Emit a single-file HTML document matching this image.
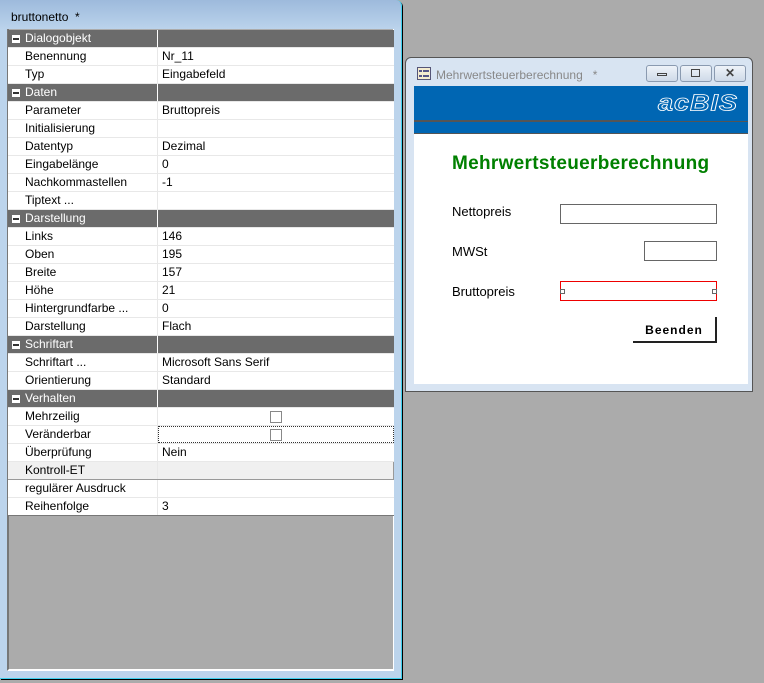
<!DOCTYPE html><html><head><style>
body{margin:0;width:764px;height:683px;background:#ababab;position:relative;overflow:hidden;font-family:"Liberation Sans",sans-serif;font-size:12px}
.lw{position:absolute;left:0;top:0;width:401px;height:678px;background:linear-gradient(#9dbadc 0,#bcd4ec 30px,#bcd4ec);border-right:1px solid #3fd0ee;border-bottom:1px solid #3fd0ee;border-radius:0 6px 0 0;box-shadow:1px 1px 0 #000}
.lt{position:absolute;left:11px;top:10px;font-size:12px;color:#000}
.inner{position:absolute;left:7px;top:29px;width:387px;height:642px;background:#ababab;border-left:2px solid #777;border-bottom:2px solid #fff;border-right:1px solid #fff;box-sizing:border-box}
.grid{position:absolute;left:8px;top:30px;width:386px}
.r{height:18px;display:flex;background:#fff;border-bottom:1px solid #e8e8e8;box-sizing:border-box;line-height:17px;color:#000}
.r .a{width:150px;box-sizing:border-box;padding-left:17px;border-right:1px solid #e8e8e8;white-space:nowrap;overflow:hidden}
.r .b{padding-left:4px;flex:1;position:relative}
.h{background:#6b6b6b;color:#fff;border-bottom:1px solid #e8e8e8}
.h .a{padding-left:17px;position:relative;border-right:1px solid #fff}
.h .a:before{content:"";position:absolute;left:4px;top:5px;width:8px;height:8px;background:#fff}
.h .a:after{content:"";position:absolute;left:5px;top:8px;width:6px;height:2px;background:#333}
.cb{position:absolute;left:112px;top:3px;width:10px;height:10px;border:1px solid #888;background:#fff}
.rw{position:absolute;left:405px;top:57px;width:346px;height:333px;background:#d8e4f2;border:1px solid #555;border-radius:6px 6px 0 0}
.rt{position:absolute;left:30px;top:10px;color:#888;font-size:12px}
.btn{position:absolute;top:7px;width:30px;height:15px;border:1px solid #8a9ab0;border-radius:3px;background:linear-gradient(#eef3f9,#cfdae8)}
.band{position:absolute;left:414px;top:86px;width:334px;height:47px;background:#0066b3}
.white{position:absolute;left:414px;top:133px;width:334px;height:250px;background:#fff;border-top:1px solid #555}
.lbl{position:absolute;font-size:13px;color:#000}
.box{position:absolute;border:1px solid #666;background:#fff}
</style></head><body>
<div class="lw"><div class="lt">bruttonetto &nbsp;*</div></div>
<div class="inner"></div>
<div class="grid">
<div class="r h"><div class="a">Dialogobjekt</div><div class="b"></div></div>
<div class="r"><div class="a">Benennung</div><div class="b">Nr_11</div></div>
<div class="r"><div class="a">Typ</div><div class="b">Eingabefeld</div></div>
<div class="r h"><div class="a">Daten</div><div class="b"></div></div>
<div class="r"><div class="a">Parameter</div><div class="b">Bruttopreis</div></div>
<div class="r"><div class="a">Initialisierung</div><div class="b"></div></div>
<div class="r"><div class="a">Datentyp</div><div class="b">Dezimal</div></div>
<div class="r"><div class="a">Eingabelänge</div><div class="b">0</div></div>
<div class="r"><div class="a">Nachkommastellen</div><div class="b">-1</div></div>
<div class="r"><div class="a">Tiptext ...</div><div class="b"></div></div>
<div class="r h"><div class="a">Darstellung</div><div class="b"></div></div>
<div class="r"><div class="a">Links</div><div class="b">146</div></div>
<div class="r"><div class="a">Oben</div><div class="b">195</div></div>
<div class="r"><div class="a">Breite</div><div class="b">157</div></div>
<div class="r"><div class="a">Höhe</div><div class="b">21</div></div>
<div class="r"><div class="a">Hintergrundfarbe ...</div><div class="b">0</div></div>
<div class="r"><div class="a">Darstellung</div><div class="b">Flach</div></div>
<div class="r h"><div class="a">Schriftart</div><div class="b"></div></div>
<div class="r"><div class="a">Schriftart ...</div><div class="b">Microsoft Sans Serif</div></div>
<div class="r"><div class="a">Orientierung</div><div class="b">Standard</div></div>
<div class="r h"><div class="a">Verhalten</div><div class="b"></div></div>
<div class="r"><div class="a">Mehrzeilig</div><div class="b"><span class="cb"></span></div></div>
<div class="r"><div class="a">Veränderbar</div><div class="b" style="outline:1px dotted #333;outline-offset:-1px"><span class="cb"></span></div></div>
<div class="r"><div class="a">Überprüfung</div><div class="b">Nein</div></div>
<div class="r" style="background:#f0f0f0;border-bottom:1px solid #999"><div class="a">Kontroll-ET</div><div class="b" style="border-right:1px solid #999"></div></div>
<div class="r"><div class="a">regulärer Ausdruck</div><div class="b"></div></div>
<div class="r" style="border-bottom:1px solid #777"><div class="a">Reihenfolge</div><div class="b">3</div></div>
</div>
<div class="rw">
<svg style="position:absolute;left:11px;top:9px" width="14" height="13"><rect x="0.5" y="0.5" width="13" height="12" fill="#f4ecd0" stroke="#557"/><rect x="2" y="3" width="3" height="2" fill="#558"/><rect x="6" y="3" width="6" height="2" fill="#558"/><rect x="2" y="8" width="3" height="2" fill="#558"/><rect x="6" y="8" width="6" height="2" fill="#558"/></svg>
<div class="rt">Mehrwertsteuerberechnung &nbsp;&nbsp;*</div>
<div class="btn" style="left:240px"><div style="position:absolute;left:10px;top:7px;width:10px;height:3px;border:1px solid #444;box-sizing:border-box"></div></div>
<div class="btn" style="left:274px"><div style="position:absolute;left:10px;top:3px;width:9px;height:8px;border:1px solid #444;box-sizing:border-box"></div></div>
<div class="btn" style="left:308px;font-weight:bold;text-align:center;line-height:14px;color:#444">✕</div>
</div>
<div class="band">
<div style="position:absolute;left:0;top:34px;width:224px;height:2px;background:#555"></div>
<div style="position:absolute;left:224px;top:35px;width:110px;height:1px;background:#555"></div>
<div style="position:absolute;right:10px;top:2px;font:italic bold 27px 'Liberation Sans',sans-serif;color:#0066b3;-webkit-text-stroke:1px #fff;letter-spacing:1px;transform:scaleY(0.85)">acBIS</div>
</div>
<div class="white">
<div style="position:absolute;left:38px;top:19px;font-size:19px;font-weight:bold;color:#008000;letter-spacing:0.3px">Mehrwertsteuerberechnung</div>
</div>
<div class="lbl" style="left:452px;top:204px">Nettopreis</div>
<div class="lbl" style="left:452px;top:244px">MWSt</div>
<div class="lbl" style="left:452px;top:284px">Bruttopreis</div>
<div class="box" style="left:560px;top:204px;width:155px;height:18px"></div>
<div class="box" style="left:644px;top:241px;width:71px;height:18px"></div>
<div class="box" style="left:560px;top:281px;width:155px;height:18px;border-color:#e00"></div>
<div style="position:absolute;left:560px;top:289px;width:3px;height:3px;border:1px solid #666;background:#fff"></div>
<div style="position:absolute;left:712px;top:289px;width:3px;height:3px;border:1px solid #666;background:#fff"></div>
<div style="position:absolute;left:633px;top:317px;width:82px;height:24px;border-right:2px solid #222;border-bottom:2px solid #222;background:#fff;font-weight:bold;font-size:12px;text-align:center;line-height:26px;letter-spacing:1px">Beenden</div>
</body></html>
